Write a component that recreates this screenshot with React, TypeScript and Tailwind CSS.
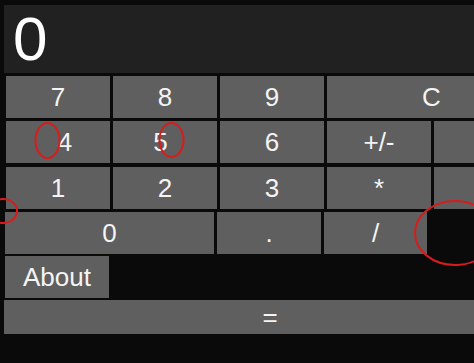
import React from "react";

const btn =
  "h-[42px] shrink-0 bg-[#5f5f5f] text-[#f4f4f4] text-[26px] leading-none flex items-center justify-center";

export default function App() {
  return (
    <div
      className="relative w-[474px] h-[363px] overflow-hidden bg-[#0a0a0a]"
      style={{ fontFamily: '"Liberation Sans", Arial, sans-serif' }}
    >
      <div className="w-[540px] flex flex-col">
        <div className="mt-[5px] ml-[4px] h-[68px] w-[536px] bg-[#212121] flex items-center pl-[9px]">
          <span className="text-white text-[62px] leading-none">0</span>
        </div>

        <div className="mt-[3px] ml-[6px] flex gap-[3px]">
          <div className={`${btn} w-[104px]`}>7</div>
          <div className={`${btn} w-[104px]`}>8</div>
          <div className={`${btn} w-[104px]`}>9</div>
          <div className={`${btn} w-[209px]`}>C</div>
        </div>

        <div className="mt-[3px] ml-[6px] flex gap-[3px]">
          <div className={`${btn} w-[104px] pl-[14px]`}>4</div>
          <div className={`${btn} w-[104px] pr-[9px]`}>5</div>
          <div className={`${btn} w-[104px]`}>6</div>
          <div className={`${btn} w-[104px]`}>+/-</div>
          <div className={`${btn} w-[104px]`} />
        </div>

        <div className="mt-[4px] ml-[6px] flex gap-[3px]">
          <div className={`${btn} w-[104px]`}>1</div>
          <div className={`${btn} w-[104px]`}>2</div>
          <div className={`${btn} w-[104px]`}>3</div>
          <div className={`${btn} w-[104px]`}>*</div>
          <div className={`${btn} w-[104px]`} />
        </div>

        <div className="mt-[3px] ml-[5px] flex gap-[3px]">
          <div className={`${btn} w-[209px]`}>0</div>
          <div className={`${btn} w-[104px]`}>.</div>
          <div className={`${btn} w-[103px]`}>/</div>
        </div>

        <div className="mt-[2px] ml-[5px] flex">
          <div className={`${btn} w-[104px]`}>About</div>
        </div>

        <div className="mt-[2px] ml-[4px] h-[34px] w-[532px] bg-[#5f5f5f] text-[#f4f4f4] text-[26px] leading-none flex items-center justify-center">
          =
        </div>
      </div>

      <svg
        className="absolute inset-0 pointer-events-none"
        width="474"
        height="363"
        viewBox="0 0 474 363"
      >
        <g fill="none" stroke="#d81c1c" strokeWidth="2">
          <ellipse cx="47.5" cy="140.5" rx="12" ry="17.5" />
          <ellipse cx="171.5" cy="140" rx="12" ry="17" />
          <ellipse cx="3" cy="211" rx="14" ry="12" />
          <ellipse cx="455" cy="233" rx="40" ry="32" />
        </g>
      </svg>
    </div>
  );
}
